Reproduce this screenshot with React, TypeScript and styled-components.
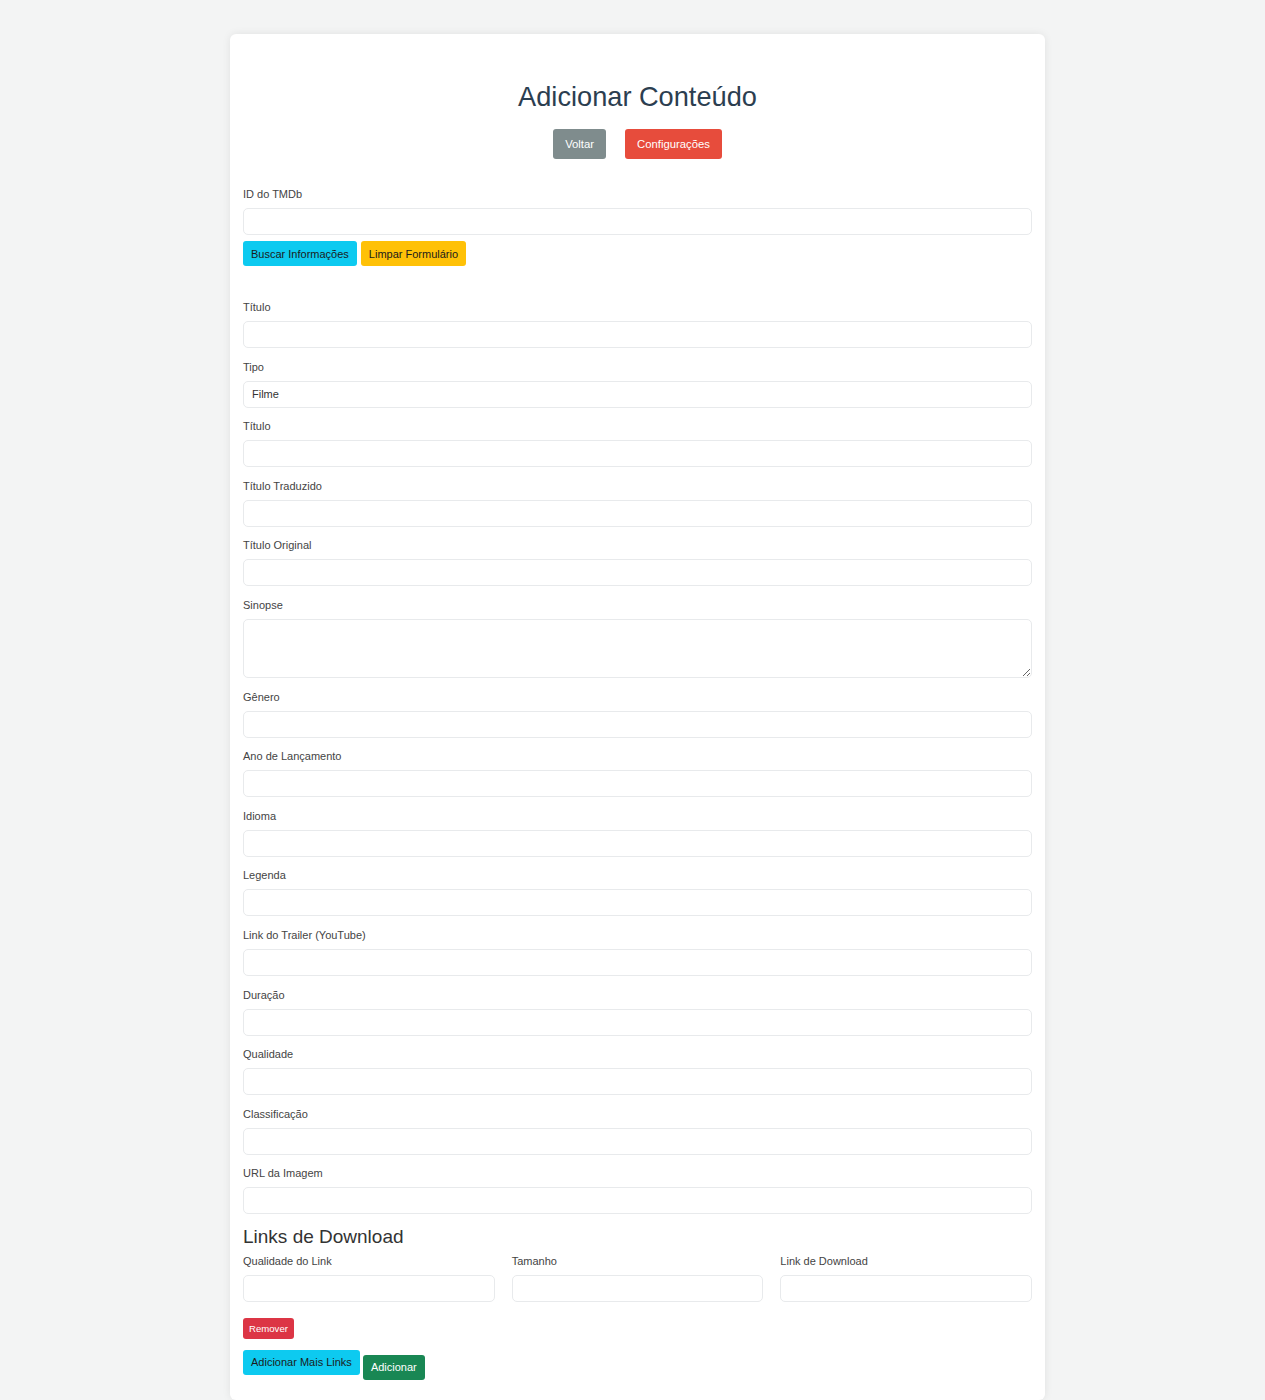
import React from "react";
import styled, { createGlobalStyle } from "styled-components";

const fields = [
  "Título Traduzido",
  "Título Original",
];

const moreFields = [
  "Gênero",
  "Ano de Lançamento",
  "Idioma",
  "Legenda",
  "Link do Trailer (YouTube)",
  "Duração",
  "Qualidade",
  "Classificação",
  "URL da Imagem",
];

function App() {
  return (
    <>
      <GlobalStyle />
      <Card>
        <Title>Adicionar Conteúdo</Title>
        <NavRow>
          <NavButton $bg="#7f8c8d">Voltar</NavButton>
          <NavButton $bg="#e74c3c">Configurações</NavButton>
        </NavRow>

        <SearchGroup>
          <Label>ID do TMDb</Label>
          <Input />
          <ButtonRow>
            <ActionButton $bg="#0dcaf0">Buscar Informações</ActionButton>
            <ActionButton $bg="#ffc107">Limpar Formulário</ActionButton>
          </ButtonRow>
        </SearchGroup>

        <Field>
          <Label>Título</Label>
          <Input />
        </Field>
        <Field>
          <Label>Tipo</Label>
          <Select defaultValue="filme">
            <option value="filme">Filme</option>
            <option value="serie">Série</option>
          </Select>
        </Field>
        <Field>
          <Label>Título</Label>
          <Input />
        </Field>
        {fields.map((f) => (
          <Field key={f}>
            <Label>{f}</Label>
            <Input />
          </Field>
        ))}
        <Field>
          <Label>Sinopse</Label>
          <TextArea />
        </Field>
        {moreFields.map((f) => (
          <Field key={f}>
            <Label>{f}</Label>
            <Input />
          </Field>
        ))}

        <SectionTitle>Links de Download</SectionTitle>
        <LinkGrid>
          <div>
            <Label>Qualidade do Link</Label>
            <Input />
          </div>
          <div>
            <Label>Tamanho</Label>
            <Input />
          </div>
          <div>
            <Label>Link de Download</Label>
            <Input />
          </div>
        </LinkGrid>
        <RemoveButton>Remover</RemoveButton>
        <FooterRow>
          <ActionButton $bg="#0dcaf0">Adicionar Mais Links</ActionButton>
          <SubmitButton>Adicionar</SubmitButton>
        </FooterRow>
      </Card>
    </>
  );
}

const GlobalStyle = createGlobalStyle`
  body {
    margin: 0;
    padding: 34px 0 0 10px;
    background: #f3f4f4;
    font-family: "Liberation Sans", Arial, sans-serif;
    color: #333;
  }
`;

const Card = styled.div`
  width: 815px;
  box-sizing: border-box;
  margin: 0 auto;
  padding: 20px 13px 20px 13px;
  background: #fff;
  border-radius: 6px;
  box-shadow: 0 0 8px rgba(0, 0, 0, 0.08);
`;

const Title = styled.h1`
  margin: 26px 0 15px;
  text-align: center;
  font-size: 27.2px;
  font-weight: 400;
  line-height: 34px;
  color: #2c3e50;
`;

const NavRow = styled.div`
  display: flex;
  justify-content: center;
  gap: 19px;
  margin-bottom: 26px;
`;

const NavButton = styled.button<{ $bg: string }>`
  height: 30px;
  padding: 0 12px;
  border: none;
  border-radius: 3px;
  background: ${(p) => p.$bg};
  color: #fff;
  font-family: inherit;
  font-size: 11.3px;
`;

const SearchGroup = styled.div`
  margin-bottom: 32px;
`;

const Field = styled.div`
  margin-bottom: 9.6px;
`;

const Label = styled.label`
  display: block;
  margin-bottom: 5px;
  font-size: 11px;
  line-height: 18px;
  color: #444;
`;

const inputBase = `
  display: block;
  width: 100%;
  box-sizing: border-box;
  border: 1px solid #e8eaec;
  border-radius: 5px;
  background: #fff;
  font-family: inherit;
  font-size: 11px;
  color: #333;
  outline: none;
`;

const Input = styled.input`
  ${inputBase}
  height: 27px;
  padding: 0 8px;
`;

const Select = styled.select`
  ${inputBase}
  height: 27px;
  padding: 0 8px;
  appearance: none;
`;

const TextArea = styled.textarea`
  ${inputBase}
  height: 59px;
  padding: 6px 8px;
  resize: vertical;
`;

const ButtonRow = styled.div`
  display: flex;
  gap: 4px;
  margin-top: 6px;
`;

const ActionButton = styled.button<{ $bg: string }>`
  height: 25px;
  padding: 0 8px;
  border: none;
  border-radius: 3px;
  background: ${(p) => p.$bg};
  color: #1b1b1b;
  font-family: inherit;
  font-size: 11px;
`;

const SectionTitle = styled.h2`
  margin: 0 0 3px;
  font-size: 19px;
  font-weight: 400;
  line-height: 25px;
  color: #333;
`;

const LinkGrid = styled.div`
  display: grid;
  grid-template-columns: repeat(3, 1fr);
  gap: 17px;
  margin-bottom: 16px;
`;

const RemoveButton = styled.button`
  display: block;
  height: 21px;
  padding: 0 6px;
  border: none;
  border-radius: 3px;
  background: #dc3545;
  color: #fff;
  font-family: inherit;
  font-size: 9.6px;
  margin-bottom: 11px;
`;

const FooterRow = styled.div`
  display: flex;
  align-items: flex-start;
  gap: 3px;
`;

const SubmitButton = styled.button`
  height: 25px;
  margin-top: 5px;
  padding: 0 8px;
  border: none;
  border-radius: 3px;
  background: #198754;
  color: #fff;
  font-family: inherit;
  font-size: 11px;
`;

export default App;
